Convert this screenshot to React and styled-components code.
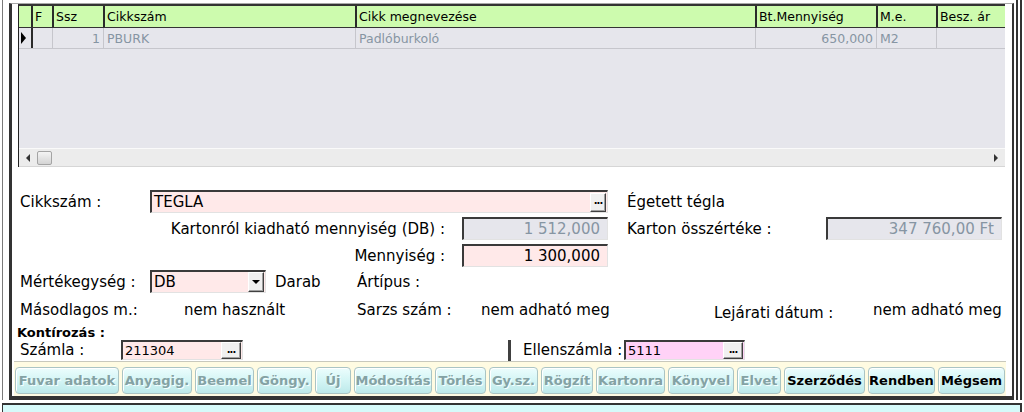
import React from 'react';
import styled, { createGlobalStyle } from 'styled-components';

const GlobalStyle = createGlobalStyle`
  html, body { margin: 0; padding: 0; background: #fff; }
  body { font-family: "DejaVu Sans", Verdana, sans-serif; color: #000; }
`;

const Screen = styled.div`
  width: 1024px;
  height: 412px;
  overflow: hidden;
  background: #fff;
  display: flex;
  flex-direction: column;
`;

const Window = styled.div`
  height: 400px;
  padding: 0 2px;
  display: flex;
`;

const Bezel = styled.div`
  flex: 1;
  display: flex;
  border-left: 1px solid #7a7a7a;
  border-right: 2px solid #333;
  padding: 0 2px 0 6px;
`;

const InnerBezel = styled.div`
  flex: 1;
  display: flex;
  border-right: 2px solid #333;
  padding-right: 2px;
`;

const Frame = styled.div`
  flex: 1;
  margin-top: 3px;
  border-top: 1px solid #a8a8a8;
  border-left: 3px solid #333;
  border-right: 2px solid #333;
  border-bottom: 4px solid #333;
  display: flex;
  flex-direction: column;
`;

const StatusStrip = styled.div`
  margin: 3px 2px 0 2px;
  height: 7px;
  border-top: 2px solid #333;
  border-left: 1px solid #333;
  border-right: 2px solid #333;
  background: #d6fafa;
`;

/* ---------- grid ---------- */

const columns = '12px 21px 51px 252px 400px 121px 60px 1fr';

const GridBox = styled.div`
  margin: 0 7px 0 6px;
  height: 163px;
  box-sizing: border-box;
  border-left: 1px solid #222;
  border-top: 2px solid #333;
  background: #e6e6ec;
  display: flex;
  flex-direction: column;
  font-size: 12.5px;
`;

const HeaderRow = styled.div`
  display: grid;
  grid-template-columns: ${columns};
  height: 22px;
  box-sizing: border-box;
  border-bottom: 1px solid #333;
  background: #cdfbae;
`;

const HeadCell = styled.div`
  box-sizing: border-box;
  border-left: ${({ first }) => (first ? 'none' : '2px solid #2a2a2a')};
  padding-left: 2px;
  display: flex;
  align-items: center;
  white-space: nowrap;
  overflow: hidden;
`;

const DataRow = styled.div`
  display: grid;
  grid-template-columns: ${columns};
  height: 21px;
  box-sizing: border-box;
  border-bottom: 1px solid #c6c6cc;
  color: #8695a3;
`;

const DataCell = styled.div`
  box-sizing: border-box;
  border-left: ${({ sep }) =>
    sep === 'dark' ? '2px solid #2a2a2a' : sep === 'none' ? 'none' : '1px solid #c6c6cc'};
  padding: 0 3px 0 3px;
  display: flex;
  align-items: center;
  justify-content: ${({ right }) => (right ? 'flex-end' : 'flex-start')};
  white-space: nowrap;
  overflow: hidden;
`;

const MarkerCell = styled(DataCell)`
  padding: 0;
`;

const RowMarker = styled.div`
  width: 0;
  height: 0;
  margin-left: 2px;
  border-top: 6px solid transparent;
  border-bottom: 6px solid transparent;
  border-left: 5px solid #000;
`;

const GridFill = styled.div`
  flex: 1;
`;

const HScroll = styled.div`
  height: 19px;
  box-sizing: border-box;
  border-top: 1px solid #fafafa;
  border-bottom: 1px solid #d6d6d6;
  background: #ececec;
  display: flex;
  align-items: center;
  padding: 0 7px;
`;

const ScrollArrow = styled.div`
  width: 0;
  height: 0;
  border-top: 4px solid transparent;
  border-bottom: 4px solid transparent;
  ${({ dir }) => (dir === 'left' ? 'border-right: 4px solid #333;' : 'border-left: 4px solid #333; margin-left: auto;')}
`;

const ScrollThumb = styled.div`
  width: 15px;
  height: 14px;
  box-sizing: border-box;
  margin-left: 7px;
  border: 1px solid #a4a4a4;
  border-radius: 2px;
  background: linear-gradient(#f4f4f4, #d4d4d4);
`;

/* ---------- form ---------- */

const Form = styled.div`
  padding: 23px 0 1px 0;
  display: flex;
  flex-direction: column;
  font-size: 15px;
`;

const Row = styled.div`
  display: flex;
  align-items: center;
  height: ${({ h }) => h || 23}px;
  margin-top: ${({ mt }) => mt || 0}px;
  padding-left: ${({ pl }) => (pl === undefined ? 8 : pl)}px;
`;

const Label = styled.div`
  flex: none;
  width: ${({ w }) => (w ? `${w}px` : 'auto')};
  margin-left: ${({ ml }) => ml || 0}px;
  padding-top: ${({ drop }) => drop || 0}px;
  text-align: ${({ right }) => (right ? 'right' : 'left')};
  white-space: nowrap;
`;

const SectionTitle = styled.div`
  font-size: 13px;
  font-weight: bold;
  padding-left: 5px;
`;

const toneBg = { pink: '#ffe9e9', gray: '#e6e6ec', violet: '#ffd2f7' };

const Field = styled.div`
  flex: none;
  width: ${({ w }) => w}px;
  height: 100%;
  margin-left: ${({ ml }) => ml || 0}px;
  box-sizing: border-box;
  background: ${({ tone }) => toneBg[tone || 'pink']};
  color: ${({ tone }) => (tone === 'gray' ? '#8695a3' : '#000')};
  border-top: 2px solid #3a3a3a;
  border-left: 2px solid #3a3a3a;
  border-right: 1px solid #e2e2e2;
  border-bottom: 1px solid #e2e2e2;
  display: flex;
  align-items: center;
  justify-content: ${({ right }) => (right ? 'flex-end' : 'flex-start')};
  padding: 0 ${({ right }) => (right ? 7 : 1)}px 0 2px;
  font-size: ${({ small }) => (small ? 13 : 15)}px;
  white-space: nowrap;
`;

const FieldText = styled.span`
  flex: ${({ grow }) => (grow ? 1 : 'none')};
`;

const DotsButton = styled.div`
  flex: none;
  width: ${({ w }) => w || 16}px;
  height: ${({ h }) => h || 19}px;
  box-sizing: border-box;
  background: #f0f0f0;
  border-top: 1px solid #fff;
  border-left: 1px solid #fff;
  border-right: 1px solid #404040;
  border-bottom: 1px solid #404040;
  box-shadow: inset -1px -1px 0 #a0a0a0;
  font-size: 10px;
  font-weight: bold;
  line-height: 1;
  display: flex;
  align-items: center;
  justify-content: center;
  letter-spacing: -1px;
  padding-bottom: 2px;
`;

const DropButton = styled(DotsButton)`
  padding-bottom: 0;
`;

const DropArrow = styled.div`
  width: 0;
  height: 0;
  border-left: 4px solid transparent;
  border-right: 4px solid transparent;
  border-top: 4px solid #000;
`;

const Divider = styled.div`
  flex: none;
  width: 3px;
  height: 21px;
  margin-left: ${({ ml }) => ml}px;
  background: #404040;
`;

/* ---------- buttons ---------- */

const ButtonBar = styled.div`
  margin: 0 6px 0 2px;
  height: 35px;
  box-sizing: border-box;
  border-top: 1px solid #c8c8bc;
  background: #fffbe2;
  display: flex;
  gap: 3px;
  padding: 5px 0 0 1px;
`;

const ActionButton = styled.button`
  flex: none;
  width: ${({ w }) => w}px;
  height: 27px;
  box-sizing: border-box;
  padding: 0;
  border: 1px solid #aac4c4;
  border-radius: 4px;
  background: linear-gradient(#ecfdfd 0%, #d6f6f6 45%, #bde9ea 100%);
  box-shadow: inset 1px 1px 0 #fff;
  font-family: "DejaVu Sans", Verdana, sans-serif;
  font-size: 13px;
  font-weight: bold;
  color: ${({ off }) => (off ? '#84a2a4' : '#000')};
  text-shadow: ${({ off }) => (off ? '1px 1px 0 #f4ffff' : 'none')};
  white-space: nowrap;
  overflow: hidden;
`;

const buttons = [
  ['Fuvar adatok', 104, true],
  ['Anyagig.', 70, true],
  ['Beemel', 59, true],
  ['Göngy.', 55, true],
  ['Új', 36, true],
  ['Módosítás', 78, true],
  ['Törlés', 51, true],
  ['Gy.sz.', 49, true],
  ['Rögzít', 52, true],
  ['Kartonra', 69, true],
  ['Könyvel', 66, true],
  ['Elvet', 44, true],
  ['Szerződés', 81, false],
  ['Rendben', 67, false],
  ['Mégsem', 67, false],
];

export default function App() {
  return (
    <>
      <GlobalStyle />
      <Screen>
        <Window>
          <Bezel>
            <InnerBezel>
              <Frame>
                <GridBox>
                  <HeaderRow>
                    <HeadCell first />
                    <HeadCell>F</HeadCell>
                    <HeadCell>Ssz</HeadCell>
                    <HeadCell>Cikkszám</HeadCell>
                    <HeadCell>Cikk megnevezése</HeadCell>
                    <HeadCell>Bt.Mennyiség</HeadCell>
                    <HeadCell>M.e.</HeadCell>
                    <HeadCell>Besz. ár</HeadCell>
                  </HeaderRow>
                  <DataRow>
                    <MarkerCell sep="none">
                      <RowMarker />
                    </MarkerCell>
                    <DataCell sep="dark" />
                    <DataCell right>1</DataCell>
                    <DataCell>PBURK</DataCell>
                    <DataCell>Padlóburkoló</DataCell>
                    <DataCell right>650,000</DataCell>
                    <DataCell>M2</DataCell>
                    <DataCell />
                  </DataRow>
                  <GridFill />
                  <HScroll>
                    <ScrollArrow dir="left" />
                    <ScrollThumb />
                    <ScrollArrow dir="right" />
                  </HScroll>
                </GridBox>

                <Form>
                  <Row>
                    <Label w={130}>Cikkszám :</Label>
                    <Field w={458}>
                      <FieldText grow>TEGLA</FieldText>
                      <DotsButton>...</DotsButton>
                    </Field>
                    <Label ml={19}>Égetett tégla</Label>
                  </Row>
                  <Row mt={4}>
                    <Label w={425} right>Kartonról kiadható mennyiség (DB) :</Label>
                    <Field w={146} ml={17} tone="gray" right>1 512,000</Field>
                    <Label w={199} ml={19}>Karton összértéke :</Label>
                    <Field w={176} tone="gray" right>347 760,00 Ft</Field>
                  </Row>
                  <Row mt={4}>
                    <Label w={425} right>Mennyiség :</Label>
                    <Field w={146} ml={17} right>1 300,000</Field>
                  </Row>
                  <Row mt={3}>
                    <Label w={130}>Mértékegység :</Label>
                    <Field w={116}>
                      <FieldText grow>DB</FieldText>
                      <DropButton h={20}>
                        <DropArrow />
                      </DropButton>
                    </Field>
                    <Label w={82} ml={9}>Darab</Label>
                    <Label>Ártípus :</Label>
                  </Row>
                  <Row mt={5}>
                    <Label w={164}>Másodlagos m.:</Label>
                    <Label w={173}>nem használt</Label>
                    <Label w={124}>Sarzs szám :</Label>
                    <Label w={233}>nem adható meg</Label>
                    <Label w={159} drop={6}>Lejárati dátum :</Label>
                    <Label>nem adható meg</Label>
                  </Row>
                  <Row mt={4} h={15} pl={0}>
                    <SectionTitle>Kontírozás :</SectionTitle>
                  </Row>
                  <Row h={20}>
                    <Label w={101}>Számla :</Label>
                    <Field w={122} small>
                      <FieldText grow>211304</FieldText>
                      <DotsButton w={20} h={17}>...</DotsButton>
                    </Field>
                    <Divider ml={265} />
                    <Label w={101} ml={12}>Ellenszámla :</Label>
                    <Field w={121} small tone="violet">
                      <FieldText grow>5111</FieldText>
                      <DotsButton w={20} h={17}>...</DotsButton>
                    </Field>
                  </Row>
                </Form>

                <ButtonBar>
                  {buttons.map(([label, w, off]) => (
                    <ActionButton key={label} w={w} off={off ? 1 : 0}>
                      {label}
                    </ActionButton>
                  ))}
                </ButtonBar>
              </Frame>
            </InnerBezel>
          </Bezel>
        </Window>
        <StatusStrip />
      </Screen>
    </>
  );
}
